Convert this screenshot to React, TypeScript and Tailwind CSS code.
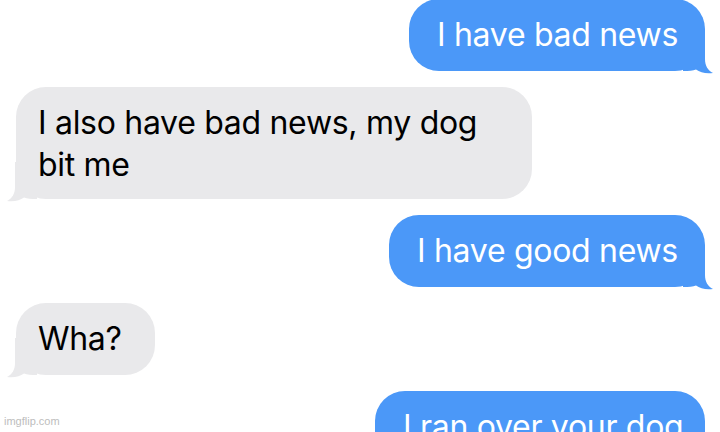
import React from 'react';

type Msg = { text: React.ReactNode; me: boolean; w: string; pad?: string };

const messages: Msg[] = [
  { text: 'I have bad news', me: true, w: 'w-[296px]' },
  {
    text: <>I also have bad news, my dog<br />bit me</>,
    me: false,
    w: 'w-[516px]',
    pad: 'pt-[15px] pb-[13px] leading-[42px]',
  },
  { text: 'I have good news', me: true, w: 'w-[316px]' },
  { text: 'Wha?', me: false, w: 'w-[139px]' },
  { text: 'I ran over your dog', me: true, w: 'w-[330px]' },
];

const Tail = ({ me }: { me: boolean }) => (
  <svg
    width="30"
    height="40"
    viewBox="0 0 30 40"
    className={
      me
        ? 'absolute right-[-8px] bottom-[-3px] fill-[#4b98f8]'
        : 'absolute left-[-9px] bottom-[-3px] fill-[#e9e9eb] -scale-x-100'
    }
  >
    <path d="M0 0 H22 V25 C22 32 25 36.5 30 39 C23 40 17 38.5 13 35.5 C10 36.5 6 37 0 37 Z" />
  </svg>
);

export default function App() {
  return (
    <div className="relative w-[720px] h-[432px] overflow-hidden bg-white font-['Inter',sans-serif]">
      <div className="flex flex-col gap-4 mt-[-1px]">
        {messages.map((m, i) => (
          <div key={i} className={m.me ? 'flex justify-end pr-[15px]' : 'flex justify-start pl-[16px]'}>
            <div
              className={
                'relative rounded-[30px] text-[32px] tracking-[-0.3px] ' +
                m.w +
                ' ' +
                (m.pad ?? 'py-4 leading-[40px]') +
                (m.me ? ' bg-[#4b98f8] text-white pl-[28px]' : ' bg-[#e9e9eb] text-black pl-[22px]')
              }
            >
              <Tail me={m.me} />
              <span className="relative">{m.text}</span>
            </div>
          </div>
        ))}
      </div>
      <div className="absolute left-[4px] bottom-[3px] text-[11px] text-[#bdbdbd] font-['Liberation_Sans',sans-serif]">
        imgflip.com
      </div>
    </div>
  );
}
